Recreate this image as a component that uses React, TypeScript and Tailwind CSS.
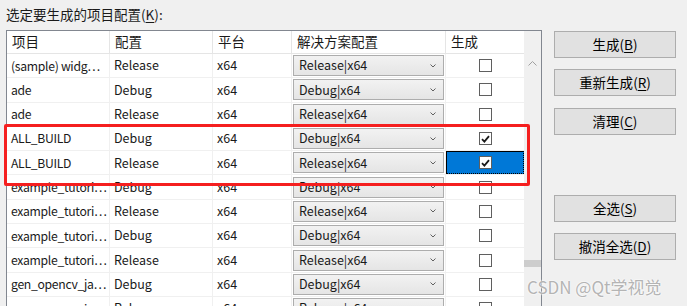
import React from "react";

type Row = {
  project: string;
  config: string;
  platform: string;
  solution: string;
  build: boolean;
  selected?: boolean;
};

const rows: Row[] = [
  { project: "(sample) widg…", config: "Release", platform: "x64", solution: "Release|x64", build: false },
  { project: "ade", config: "Debug", platform: "x64", solution: "Debug|x64", build: false },
  { project: "ade", config: "Release", platform: "x64", solution: "Release|x64", build: false },
  { project: "ALL_BUILD", config: "Debug", platform: "x64", solution: "Debug|x64", build: true },
  { project: "ALL_BUILD", config: "Release", platform: "x64", solution: "Release|x64", build: true, selected: true },
  { project: "example_tutori…", config: "Debug", platform: "x64", solution: "Debug|x64", build: false },
  { project: "example_tutori…", config: "Release", platform: "x64", solution: "Release|x64", build: false },
  { project: "example_tutori…", config: "Debug", platform: "x64", solution: "Debug|x64", build: false },
  { project: "example_tutori…", config: "Release", platform: "x64", solution: "Release|x64", build: false },
  { project: "gen_opencv_ja…", config: "Debug", platform: "x64", solution: "Debug|x64", build: false },
  { project: "gen_opencv_ja…", config: "Release", platform: "x64", solution: "Release|x64", build: false },
];

function Checkbox({ checked }: { checked: boolean }) {
  return (
    <span className="flex h-[13px] w-[13px] items-center justify-center border border-[#5f5f5f] bg-white">
      {checked && (
        <svg width="9" height="8" viewBox="0 0 9 8">
          <path d="M1 4.2 L3.4 6.6 L8 1.2" fill="none" stroke="#1a1a1a" strokeWidth="1.8" />
        </svg>
      )}
    </span>
  );
}

function Dropdown({ value }: { value: string }) {
  return (
    <div className="mx-px flex h-[21px] flex-1 items-center justify-between border border-[#adadad] bg-gradient-to-b from-[#f2f2f2] to-[#e5e5e5] pl-[5px] pr-[7px]">
      <span>{value}</span>
      <svg width="6" height="4" viewBox="0 0 6 4">
        <path d="M0.5 0.5 L3 3 L5.5 0.5" fill="none" stroke="#606060" strokeWidth="1" />
      </svg>
    </div>
  );
}

function Button({ label, accel }: { label: string; accel: string }) {
  return (
    <button className="flex h-[27px] w-[122px] items-center justify-center border border-[#adadad] bg-[#e1e1e1] text-[13.5px] text-[#000]">
      {label}(<span className="underline underline-offset-2">{accel}</span>)
    </button>
  );
}

export default function App() {
  return (
    <div
      className="relative flex h-[306px] w-[687px] overflow-hidden bg-[#f0f0f0] text-[12.5px] leading-none text-[#1a1a1a]"
      style={{ fontFamily: '"Noto Sans CJK SC", "Noto Sans", sans-serif' }}
    >
      <div className="flex min-h-0 flex-col pl-[6px]">
        <div className="flex h-[30px] shrink-0 items-center pb-[1px] text-[13.5px]">
          选定要生成的项目配置(<span className="underline underline-offset-2">K</span>):
        </div>
        <div className="flex min-h-0 w-[536px] flex-1 overflow-hidden border-l border-r border-t border-[#828790] bg-white">
          <div className="flex w-[517px] flex-col">
            <div className="flex h-[23px] shrink-0 border-b border-[#e5e5e5] text-[13.5px]">
              <div className="flex w-[103px] items-center border-r border-[#e5e5e5] pl-[5px]">项目</div>
              <div className="flex w-[103px] items-center border-r border-[#e5e5e5] pl-[5px]">配置</div>
              <div className="flex w-[79px] items-center border-r border-[#e5e5e5] pl-[5px]">平台</div>
              <div className="flex w-[154px] items-center border-r border-[#e5e5e5] pl-[5px]">解决方案配置</div>
              <div className="flex w-[78px] items-center pl-[5px]">生成</div>
            </div>
            {rows.map((r, i) => (
              <div key={i} className="flex h-[24.3px] shrink-0 border-b border-[#f0f0f0]">
                <div className="flex w-[103px] items-center overflow-hidden whitespace-nowrap border-r border-[#f0f0f0] pl-[4px] text-[12.2px] tracking-[-0.3px]">
                  {r.project}
                </div>
                <div className="flex w-[103px] items-center border-r border-[#f0f0f0] pl-[4px]">{r.config}</div>
                <div className="flex w-[79px] items-center border-r border-[#f0f0f0] pl-[4px]">{r.platform}</div>
                <div className="flex w-[154px] items-center border-r border-[#f0f0f0]">
                  <Dropdown value={r.solution} />
                </div>
                <div className="flex w-[78px] items-center">
                  {r.selected ? (
                    <div className="flex h-[23px] w-full items-center justify-center border border-black bg-[#0078d7] [border-bottom-style:dotted] [border-right-style:dotted]">
                      <Checkbox checked={r.build} />
                    </div>
                  ) : (
                    <div className="flex w-full justify-center">
                      <Checkbox checked={r.build} />
                    </div>
                  )}
                </div>
              </div>
            ))}
          </div>
          <div className="flex w-[17px] shrink-0 flex-col items-center bg-[#f0f0f0]">
            <svg className="mt-[30px] shrink-0" width="9" height="5" viewBox="0 0 9 5">
              <path d="M0.5 4.5 L4.5 0.5 L8.5 4.5" fill="none" stroke="#a0a0a0" strokeWidth="1" />
            </svg>
            <div className="mt-[194px] h-[7px] w-full shrink-0 bg-[#cdcdcd]" />
          </div>
        </div>
      </div>

      <div className="ml-[12px] flex flex-col pt-[31px]">
        <Button label="生成" accel="B" />
        <div className="mt-[11px]">
          <Button label="重新生成" accel="R" />
        </div>
        <div className="mt-[12px]">
          <Button label="清理" accel="C" />
        </div>
        <div className="mt-[60px]">
          <Button label="全选" accel="S" />
        </div>
        <div className="mt-[11px]">
          <Button label="撤消全选" accel="D" />
        </div>
      </div>

      <div className="pointer-events-none absolute left-[4px] top-[124px] h-[62px] w-[526px] rounded-[2px] border-[3px] border-[#f51f1f]" />

      <div
        className="pointer-events-none absolute left-[527px] top-[278px] text-[17px] text-[#b4b4b4]"
        style={{ textShadow: "0 0 2px #fff, 0 0 2px #fff" }}
      >
        CSDN @Qt学视觉
      </div>
    </div>
  );
}
